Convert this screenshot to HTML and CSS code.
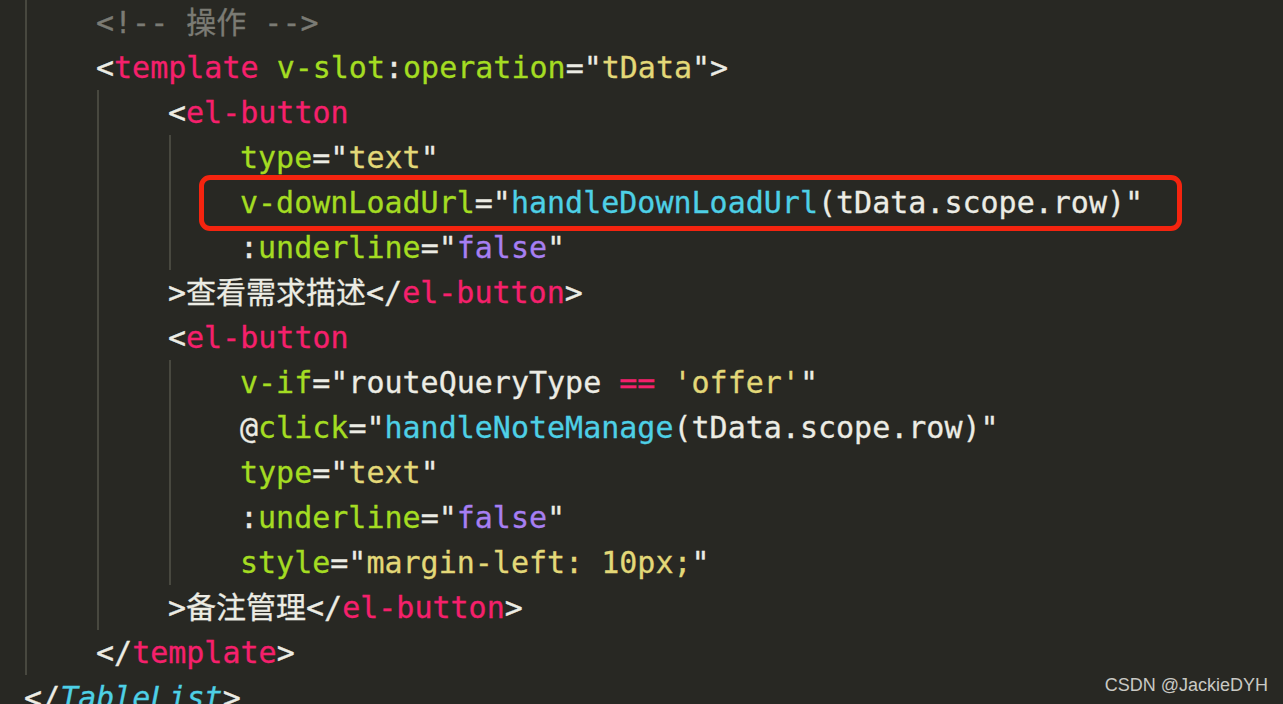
FILE: index.html
```html
<!DOCTYPE html>
<html>

<head>
    <title>TableList</title>
    <link rel="stylesheet" href="styles.css">
</head>

<body>
    <div class="editor">
        <div class="line"><span class="ind"></span><span class="cm">&lt;!-- 操作 --&gt;</span></div>
        <div class="line"><span class="ind"></span>&lt;<span class="tag">template</span> <span class="attr">v-slot</span>:<span class="attr">operation</span>="<span class="str">tData</span>"&gt;</div>
        <div class="line"><span class="ind"></span><span class="ind"></span>&lt;<span class="tag">el-button</span></div>
        <div class="line"><span class="ind"></span><span class="ind"></span><span class="ind"></span><span class="attr">type</span>="<span class="str">text</span>"</div>
        <div class="line"><span class="ind"></span><span class="ind"></span><span class="ind"></span><span class="attr">v-downLoadUrl</span>="<span class="fn">handleDownLoadUrl</span>(tData.scope.row)"<span class="mark"></span></div>
        <div class="line"><span class="ind"></span><span class="ind"></span><span class="ind"></span>:<span class="attr">underline</span>="<span class="kw">false</span>"</div>
        <div class="line"><span class="ind"></span><span class="ind"></span>&gt;查看需求描述&lt;/<span class="tag">el-button</span>&gt;</div>
        <div class="line"><span class="ind"></span><span class="ind"></span>&lt;<span class="tag">el-button</span></div>
        <div class="line"><span class="ind"></span><span class="ind"></span><span class="ind"></span><span class="attr">v-if</span>="routeQueryType <span class="tag">==</span> <span class="str">'offer'</span>"</div>
        <div class="line"><span class="ind"></span><span class="ind"></span><span class="ind"></span>@<span class="attr">click</span>="<span class="fn">handleNoteManage</span>(tData.scope.row)"</div>
        <div class="line"><span class="ind"></span><span class="ind"></span><span class="ind"></span><span class="attr">type</span>="<span class="str">text</span>"</div>
        <div class="line"><span class="ind"></span><span class="ind"></span><span class="ind"></span>:<span class="attr">underline</span>="<span class="kw">false</span>"</div>
        <div class="line"><span class="ind"></span><span class="ind"></span><span class="ind"></span><span class="attr">style</span>="<span class="str">margin-left: 10px;</span>"</div>
        <div class="line"><span class="ind"></span><span class="ind"></span>&gt;备注管理&lt;/<span class="tag">el-button</span>&gt;</div>
        <div class="line"><span class="ind"></span>&lt;/<span class="tag">template</span>&gt;</div>
        <div class="line">&lt;/<span class="comp">TableList</span>&gt;</div>
    </div>
    <div class="watermark">CSDN @JackieDYH</div>
</body>

</html>
```

FILE: styles.css
```css
html,
body {
    margin: 0;
    height: 100%;
    overflow: hidden;
    background-color: #282823;
}

.editor {
    padding-left: 24px;
    font-family: "DejaVu Sans Mono", "Noto Sans CJK SC", monospace;
    font-size: 30px;
    line-height: 45px;
    color: #ecece4;
    -webkit-text-stroke: 0.3px;
}

.line {
    position: relative;
    height: 45px;
    white-space: pre;
}

.ind {
    display: inline-block;
    width: 72px;
    height: 45px;
    vertical-align: top;
    background: linear-gradient(#48483f, #48483f) no-repeat 1px 0 / 2px 100%;
}

.cm {
    color: #7b7b74;
}

.tag {
    color: #f5206c;
}

.attr {
    color: #a4dc22;
}

.str {
    color: #e3d878;
}

.fn {
    color: #4ed0e6;
}

.kw {
    color: #a77ff2;
}

.comp {
    color: #4ed0e6;
    font-style: italic;
}

.mark {
    position: absolute;
    left: 175px;
    top: -5px;
    width: 973px;
    height: 46px;
    border: 5px solid #f5240f;
    border-radius: 11px;
}

.watermark {
    position: absolute;
    right: 15px;
    bottom: 8px;
    font-family: "Liberation Sans", Arial, sans-serif;
    font-size: 18px;
    color: #c9c9c4;
}
```
